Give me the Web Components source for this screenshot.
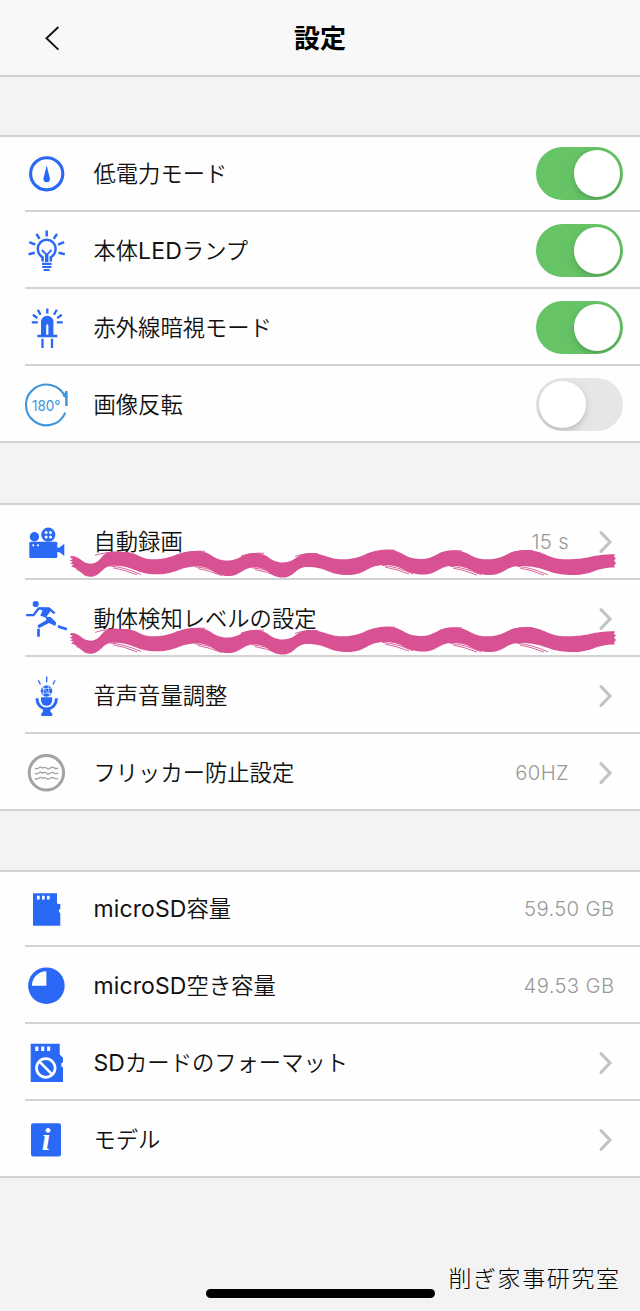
<!DOCTYPE html>
<html lang="ja">
<head>
<meta charset="utf-8">
<title>設定</title>
<style>
  html, body { margin: 0; background: #f3f3f3; }
  body { font-family: Inter, "Noto Sans CJK JP", sans-serif; color: #111; }
  .latin { font-size: 23px; font-weight: 400; letter-spacing: .1px; }
</style>
</head>
<body>
<settings-screen>
  <nav-header slot="header">設定</nav-header>

  <settings-group>
    <settings-row icon="gauge">低電力モード<toggle-switch slot="control" on></toggle-switch></settings-row>
    <settings-row icon="bulb">本体<span class="latin">LED</span>ランプ<toggle-switch slot="control" on></toggle-switch></settings-row>
    <settings-row icon="infrared">赤外線暗視モード<toggle-switch slot="control" on></toggle-switch></settings-row>
    <settings-row icon="rotate">画像反転<toggle-switch slot="control"></toggle-switch></settings-row>
  </settings-group>

  <settings-group>
    <settings-row icon="camera" value="15 s" link>自動録画<brush-wave slot="overlay"></brush-wave></settings-row>
    <settings-row icon="runner" link>動体検知レベルの設定<brush-wave slot="overlay"></brush-wave></settings-row>
    <settings-row icon="mic" link>音声音量調整</settings-row>
    <settings-row icon="flicker" value="60HZ" link>フリッカー防止設定</settings-row>
  </settings-group>

  <settings-group>
    <settings-row icon="sd" value="59.50 GB"><span class="latin">microSD</span>容量</settings-row>
    <settings-row icon="pie" value="49.53 GB"><span class="latin">microSD</span>空き容量</settings-row>
    <settings-row icon="format" link><span class="latin">SD</span>カードのフォーマット</settings-row>
    <settings-row icon="info" link>モデル</settings-row>
  </settings-group>

  <span slot="credit">削ぎ家事研究室</span>
</settings-screen>

<script>
(() => {
  const BLUE = '#2a68f6';
  const LINE = '#d2d2d2';

  // All icons share a 52x60 box, centred on the row.
  const ICONS = {
    gauge: `<circle cx="26.7" cy="29.8" r="16.1" fill="none" stroke="${BLUE}" stroke-width="3.1"/>
      <path d="M26.7 21.5 29.9 34.2Q30.4 38.2 26.7 38.2T23.5 34.2Z"/>`,
    bulb: `<g fill="none" stroke="${BLUE}" stroke-width="2.5">
      <path d="M22.6 40.5V36.4C19.5 34.4 17.8 31.5 17.8 27.7a8.9 8.9 0 0 1 17.8 0c0 3.8-1.7 6.7-4.8 8.7v4.1"/>
      <path d="M26.7 9.6v6M16.4 12.9l3.2 5M9.3 21.2l6 2.5M8.6 33.3l6.2-1.6M37 12.9l-3.2 5M44.1 21.2l-6 2.5M44.8 33.3l-6.2-1.6"/>
      <path stroke-width="1.8" d="M21.9 29l4 4V41M31.5 29l-4 4V41"/>
      <path stroke-width="2.1" d="M22 42.9h9.6M22.2 46h9.2M23.6 49h6"/></g>`,
    infrared: `<path d="M21 37V24a6.2 6.2 0 0 1 12.4 0V37H28.4V27.6Q28.4 26.3 27.3 26.3T26.2 27.6V37Z"/>
      <path fill="none" stroke="${BLUE}" stroke-width="2.3" d="M17.3 38h20M22.5 40.7V50M32 40.7V50M27.3 10.4v5.2M17.8 11.8l2.8 4.9M12.9 16.8l4.5 3.3M11.8 24.3h6M36.8 11.8 34 16.7M41.7 16.8l-4.5 3.3M42.8 24.3h-6"/>`,
    rotate: `<g fill="none" stroke="#3d95db" stroke-width="2.1"><path d="M45.3 37.6A20.4 20.4 0 1 1 45.2 22"/>
      <path stroke-width="2.5" d="M43 20.2Q46 20.5 46.4 16V31"/></g>
      <text x="12" y="35.6" font-size="14.5" textLength="28.5" lengthAdjust="spacingAndGlyphs" fill="#3d95db" font-family="Inter" font-weight="400">180°</text>`,
    camera: `<rect x="9.3" y="29.7" width="28" height="16.4" rx="1.5"/><path d="M37 35.8l2.5-.4 4.8-3.7v12.4l-4.8-3.8-2.5-.4Z"/>
      <circle cx="14.4" cy="24.7" r="4.7"/><circle cx="28.3" cy="22.7" r="7.1"/>
      <g fill="#fff"><circle cx="13.3" cy="33.3" r="1.1"/><circle cx="18" cy="33.3" r="1.1"/>
      <circle cx="26.1" cy="20.5" r="1.5"/><circle cx="30.5" cy="20.5" r="1.5"/><circle cx="26.1" cy="24.9" r="1.5"/><circle cx="30.5" cy="24.9" r="1.5"/></g>`,
    runner: `<circle cx="15.7" cy="15" r="3.1"/>
      <path d="M19.4 18.5 28.5 19 31 21.5 25.7 28.8 20.2 26.5 22.4 22Z"/>
      <path fill="none" stroke="${BLUE}" stroke-width="2.3" d="M6.2 26.2h7.3l5-6.7H29l5.6 4.9"/>
      <path d="M25.5 27.8 30.5 28 36.2 33.6 35.3 37 28.9 34 18.8 39.3 17.3 36.5 26.5 31Z"/>
      <path fill="none" stroke="${BLUE}" stroke-width="2.7" d="M18.5 39.8v8M38 37.4l8.8 2.8"/>`,
    mic: `<path d="M21 31.2h11.2v3a5.6 5.6 0 0 1-11.2 0Z"/><circle cx="26.5" cy="25" r="5.8"/>
      <path fill="none" stroke="#fff" stroke-width=".6" d="M21 23l11-1M21 27l11 .5M24 20l-1 10M28 19.5l1.5 10M22 21l8 8"/>
      <g fill="none" stroke="${BLUE}"><path stroke-width="2.8" d="M17 32.2c0 14.3 19.4 14.3 19.4 0"/>
      <path stroke-width="1.3" d="M26.7 10.5v5.8M18.3 14.2l2.2 4.3M35.1 14.2l-2.2 4.3"/></g>
      <path d="M23 43h7.4v2.7l1.8 1.8V50H21.3v-2.5l1.7-1.8Z"/>`,
    flicker: `<g fill="none" stroke="#a3a3a3"><circle cx="26.4" cy="29.8" r="17.2" stroke-width="3"/>
      <path stroke-width="1.3" d="${[24.9, 30, 35.2].map((y) => `M14.8 ${y}q1.95 1.6 3.9 0t3.9 .2q1.95-1.6 3.9 0t3.9-.2q1.95-1.4 3.9 0t3.9 0`).join('')}"/></g>`,
    sd: `<path d="M13 14.2H37V24.2L38.3 25H40.3V30L38.9 31V33L40.3 34V46.7H13Z"/>
      <path fill="#fff" d="M17 16.8h2.7v3.7H17zM22 16.8h2.7v3.7H22zM27 16.8h2.7v3.7H27z"/>`,
    pie: `<circle cx="26.4" cy="29.7" r="18.3"/><path fill="#fff" d="M26.4 29.7V15.2A14.5 14.5 0 0 0 11.9 29.7Z"/>`,
    format: `<path d="M10.7 10.7H39.7V21.5L43 24.7V29.5L41.3 30.2V33.6L43 34.3V49H10.7Z"/>
      <path fill="#fff" d="M15.3 13.6h3.1v4.5h-3.1zM21.2 13.6h3.1v4.5h-3.1zM27.1 13.6h3.1v4.5h-3.1z"/>
      <g fill="none" stroke="#fff" stroke-width="2.7"><circle cx="25.8" cy="35" r="9.3"/><path d="M19.2 28.4l13.2 13.2"/></g>`,
    info: `<rect x="11" y="13.2" width="30" height="33.3" rx="2.2"/>
      <text x="26" y="40.3" font-size="31" text-anchor="middle" fill="#fff" font-family="Liberation Serif" font-weight="700" font-style="italic">i</text>`
  };

  class BaseElement extends HTMLElement {
    connectedCallback() {
      if (this.shadowRoot) return;
      this.attachShadow({ mode: 'open' }).innerHTML = this.template();
    }
  }

  class SettingsScreen extends BaseElement {
    template() {
      return `<style>
        :host { display: flex; flex-direction: column; position: relative;
          box-sizing: border-box; width: 640px; height: 1311px; overflow: hidden; background: #f3f3f3; }
        main { display: flex; flex-direction: column; gap: 60px; padding-top: 58px; }
        footer { margin-top: auto; display: flex; justify-content: center; padding-bottom: 13px; }
        .home { width: 229px; height: 9px; border-radius: 5px; background: #000; }
        .credit { position: absolute; right: 21px; bottom: 15px; line-height: 34px; white-space: nowrap;
          font-size: 23px; font-weight: 200; letter-spacing: 1.6px; margin-right: -1.6px; color: #000; }
      </style>
      <slot name="header"></slot>
      <main><slot></slot></main>
      <footer><div class="home"></div></footer>
      <div class="credit"><slot name="credit"></slot></div>`;
    }
  }

  class NavHeader extends BaseElement {
    template() {
      return `<style>
        :host { display: grid; grid-template-columns: 100px 1fr 100px; align-items: center;
          height: 75px; background: #f8f8f8; border-bottom: 2px solid ${LINE}; }
        svg { display: block; margin-left: 40px; }
        h1 { margin: 0; padding-top: 3px; text-align: center; font-size: 26px; line-height: 40px; font-weight: 700; color: #000; }
      </style>
      <svg width="24" height="30" fill="none" stroke="#111" stroke-width="1.9"><path d="M18.4 4 6.5 15.3 18.4 26.6"/></svg>
      <h1><slot></slot></h1>`;
    }
  }

  class SettingsGroup extends BaseElement {
    template() {
      return `<style>
        :host { display: flex; flex-direction: column; border-top: 2px solid ${LINE}; background: #fefefe; }
        :host(:last-of-type) { margin-top: -1px; }
        ::slotted(:first-child) { --row-height: 75px; --nudge: 0px; }
        ::slotted(:last-child) { --inset: 0px; }
      </style><slot></slot>`;
    }
  }

  class SettingsRow extends BaseElement {
    template() {
      const value = this.getAttribute('value');
      const link = this.hasAttribute('link');
      return `<style>
        :host { display: block; }
        .row { position: relative; display: flex; align-items: center; box-sizing: border-box;
          height: var(--row-height, 77px); margin-left: var(--inset, 25px);
          padding: var(--nudge, 2px) 17px 0 0; border-bottom: 2px solid ${LINE}; }
        .icon { flex: none; width: 52px; height: 60px; margin-left: calc(20px - var(--inset, 25px)); }
        .label { flex: 1; padding-left: 21.5px; font-size: 22.3px; line-height: 34px; font-weight: 350; white-space: nowrap; }
        .value { font-size: 20.3px; line-height: 30px; font-weight: 350; letter-spacing: .35px; color: #999;
          margin-right: ${link ? '28.5px' : '8.5px'}; }
        .chevron { flex: none; margin-right: 10.5px; }
      </style>
      <div class="row">
        <svg class="icon" viewBox="0 0 52 60" fill="${BLUE}">${ICONS[this.getAttribute('icon')]}</svg>
        <div class="label"><slot></slot></div>
        ${value ? `<div class="value">${value}</div>` : ''}
        <slot name="control"></slot>
        ${link ? '<svg class="chevron" width="15" height="24" fill="none" stroke="#c3c3c3" stroke-width="3.1" stroke-linecap="round"><path d="M3 2.7 12 12 3 21.3"/></svg>' : ''}
        <slot name="overlay"></slot>
      </div>`;
    }
  }

  class ToggleSwitch extends BaseElement {
    template() {
      return `<style>
        :host { display: flex; align-items: center; box-sizing: border-box; width: 87px; height: 53px;
          padding: 0 3px; border-radius: 27px; background: #e6e6e8; overflow: hidden; }
        :host([on]) { justify-content: flex-end; background: #66c466; }
        .knob { width: 46.5px; height: 46.5px; border-radius: 50%; background: #fff;
          box-shadow: 0 3px 8px rgba(0,0,0,.15), 0 2px 2px rgba(0,0,0,.06); }
      </style><div class="knob"></div>`;
    }
  }

  // Brush stroke drawn over a row: two edges through their crests and troughs, plus loose bristles.
  class BrushWave extends BaseElement {
    template() {
      const top = [[71, 51], [91, 58.7], [112, 46.6], [124, 47], [153, 54.3], [197, 46], [227, 55.5], [255, 48],
        [283, 57.5], [309, 48.3], [343, 54.3], [387, 44.8], [420, 54], [453, 45.5], [487, 54.3], [525, 45.2],
        [567, 54.3], [615, 49.3]];
      const bottom = [[615, 62.5], [573, 70], [520, 61], [490, 70], [453, 61], [423, 69.5], [385, 60], [348, 70],
        [307, 62], [283, 72.5], [255, 62.5], [228, 71], [198, 61.5], [157, 69.3], [113, 60.7], [90, 71.7], [71, 61.7]];
      const edge = (pts) => pts.slice(1).map(([x, y], i) => {
        const [px, py] = pts[i];
        const mid = (px + x) / 2;
        return `C${mid} ${py} ${mid} ${y} ${x} ${y}`;
      }).join('');
      const d = `M71 51${edge(top)}L614 52 616 53.5 614 55.5 616 58 614 60.5 615 62.5${edge(bottom)}L74 60 70 58.3 73 57 69.5 55.5 73 54 70 52.7Z`;
      // thin trails left under each crest and along its top
      const trails = [[113, 61], [198, 61.8], [255, 62.8], [385, 60.3], [453, 61.3], [520, 61.3]]
        .map(([x, y]) => `M${x - 3} ${y}q14 1 31 8.5M${x} ${y + 1.8}q10 1.5 24 7`).join('');
      const crests = [[105, 47.8], [192, 46.5], [251, 48.5], [305, 48.8], [382, 45.4], [449, 46], [520, 45.7]]
        .map(([x, y]) => `M${x - 10} ${y + 2.6}Q${x} ${y - 1} ${x + 13} ${y - .2}`).join('');
      return `<style>
        :host { position: absolute; left: calc(66px - var(--inset, 25px)); bottom: -1px; width: 556px; height: 31px; pointer-events: none; }
        svg { display: block; }
      </style>
      <svg width="556" height="31" viewBox="66 43 556 31">
        <path fill="#d85192" d="${d}"/>
        <path fill="none" stroke="#d85192" stroke-width=".9" d="${trails}${crests}M72 60.5l14 8.8M76 64l9 5.2"/>
      </svg>`;
    }
  }

  customElements.define('brush-wave', BrushWave);
  customElements.define('toggle-switch', ToggleSwitch);
  customElements.define('settings-row', SettingsRow);
  customElements.define('settings-group', SettingsGroup);
  customElements.define('nav-header', NavHeader);
  customElements.define('settings-screen', SettingsScreen);
})();
</script>
</body>
</html>
